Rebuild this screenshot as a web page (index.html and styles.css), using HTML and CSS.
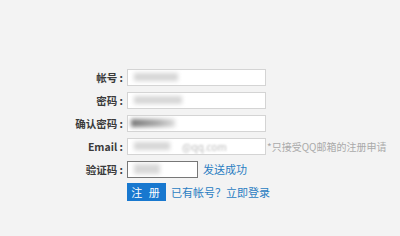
FILE: index.html
```html
<!DOCTYPE html>
<html lang="zh-CN">
<head>
  <meta charset="UTF-8">
  <title>注册</title>
  <link rel="stylesheet" href="styles.css">
</head>
<body>
  <div class="reg-form">
    <div class="row">
      <label class="label">帐号 :</label>
      <div class="field"><span class="blur blur-user"></span></div>
    </div>
    <div class="row">
      <label class="label">密码 :</label>
      <div class="field"><span class="blur blur-pass"></span></div>
    </div>
    <div class="row">
      <label class="label">确认密码 :</label>
      <div class="field"><span class="blur blur-confirm"></span></div>
    </div>
    <div class="row">
      <label class="label">Email :</label>
      <div class="field"><span class="blur blur-mail"></span><span class="blur-text">@qq.com</span></div>
      <span class="note">*只接受QQ邮箱的注册申请</span>
    </div>
    <div class="row">
      <label class="label">验证码 :</label>
      <div class="field field-code"><span class="blur blur-code"></span></div>
      <a class="link send" href="#">发送成功</a>
    </div>
    <div class="row actions">
      <button class="btn">注 册</button>
      <a class="link" href="#">已有帐号？立即登录</a>
    </div>
  </div>
</body>
</html>
```

FILE: styles.css
```css
* {
  margin: 0;
  padding: 0;
  box-sizing: border-box;
}

body {
  background: #f3f3f3;
  font-family: "Noto Sans CJK SC", "Liberation Sans", sans-serif;
  font-size: 11px;
  color: #333;
}

.reg-form {
  padding-top: 68px;
}

.row {
  display: flex;
  align-items: center;
  height: 18px;
  margin-bottom: 5px;
}

.label {
  width: 124px;
  padding-right: 1px;
  text-align: right;
  font-weight: bold;
  color: #3a3a3a;
  font-size: 10.5px;
}

.field {
  width: 139px;
  height: 17px;
  margin-left: 3px;
  background: #fff;
  border: 1px solid #d4d4d4;
  display: flex;
  align-items: center;
  padding-left: 6px;
  overflow: hidden;
}

.field-code {
  width: 71px;
  border-color: #777;
}

.blur {
  display: inline-block;
  height: 8px;
  background: #d6d6d6;
  filter: blur(2px);
}

.blur-user { width: 44px; }
.blur-pass { width: 48px; }
.blur-confirm {
  width: 44px;
  margin-left: -3px;
  background: linear-gradient(90deg, #777, #aaa 60%, #ddd);
}
.blur-mail { width: 36px; }
.blur-code { width: 26px; background: #d8d8d8; height: 10px; }

.blur-text {
  margin-left: 12px;
  color: #bbb;
  font-size: 10px;
  filter: blur(1.2px);
}

.note {
  margin-left: 1px;
  color: #aaa;
  font-size: 10px;
}

.link {
  color: #2a7dc2;
  text-decoration: none;
  font-size: 11px;
}

.send {
  margin-left: 5px;
}

.actions {
  padding-left: 127px;
  margin-top: 1px;
}

.btn {
  width: 39px;
  height: 18px;
  background: #1878cf;
  color: #fff;
  border: none;
  font-family: inherit;
  font-size: 11px;
  letter-spacing: 2px;
  margin-right: 5px;
}
```
